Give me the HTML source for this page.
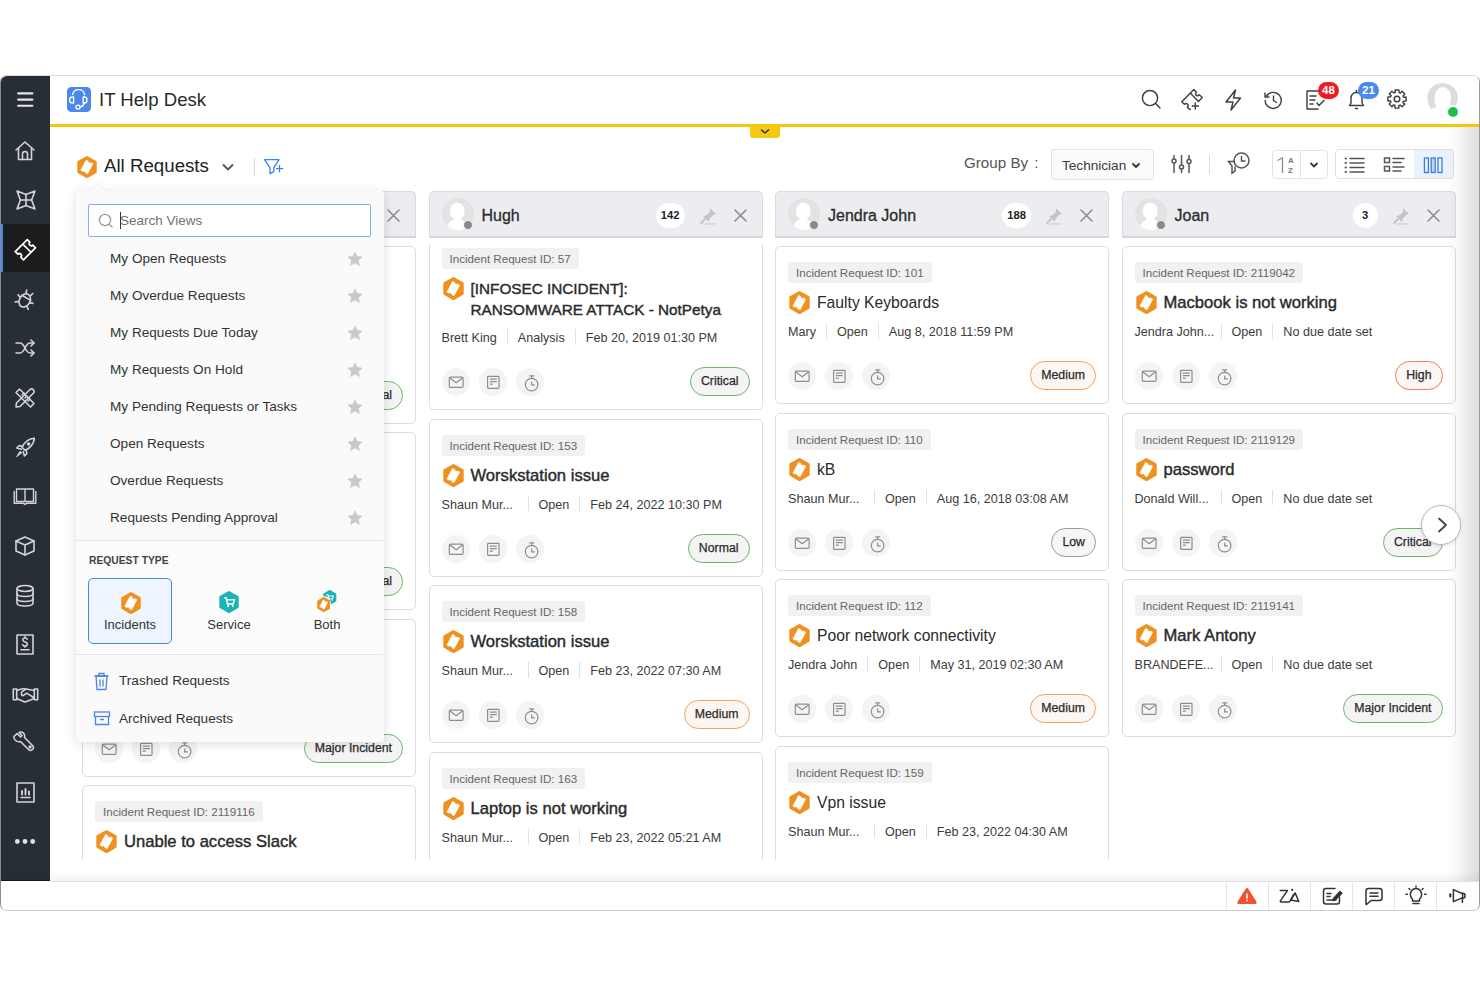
<!DOCTYPE html>
<html><head><meta charset="utf-8"><style>
*{box-sizing:border-box}
html,body{margin:0;padding:0;width:1480px;height:987px;overflow:hidden;background:#fff;font-family:"Liberation Sans", sans-serif}
#win{position:absolute;left:0;top:75px;width:1480px;height:836px;border:1px solid #c6cdd4;border-top-color:#dcdcdc;border-left-color:#8a8b8c;border-right-color:#9a9c9c;border-radius:7px;overflow:hidden;background:#fff}
#in{position:absolute;left:-1px;top:-76px;width:1480px;height:987px}
.colh{position:absolute;top:191px;width:334px;height:47px;background:#ecedf1;border:1px solid #d9dadd;border-bottom:2px solid #d6d6d6;border-radius:5px 5px 0 0}
.av{position:absolute;left:12px;top:5.5px;width:32px;height:32px;border-radius:50%;background:#e3e3e3;overflow:hidden}
.avd{position:absolute;left:33px;top:28px;width:10px;height:10px;border-radius:50%;background:#8a8a8a;border:1px solid #f4f4f4}
.cn{position:absolute;left:52px;top:13px;font-size:16px;-webkit-text-stroke:0.3px #2b2b2b;line-height:22px;color:#2b2b2b;white-space:nowrap}
.cnt{position:absolute;right:77px;top:10.5px;height:25px;padding:0 5px;min-width:25px;border-radius:12.5px;background:#fff;font-size:11.2px;font-weight:700;line-height:25px;color:#222;text-align:center}
.scroll{position:absolute;left:50px;top:245px;width:1430px;height:615px;overflow:hidden}
.scroll .card{margin-left:-50px;margin-top:-245px}
.card{position:absolute;width:334px;border:1px solid #dddddd;border-radius:5px;background:#fff}
.tag{position:absolute;left:12px;top:15px;height:21px;padding:0 8px;background:#f1f1f1;border-radius:3px;font-size:11.6px;line-height:21px;color:#666;white-space:nowrap}
.ttl{position:absolute;left:41px;top:46px;line-height:20.5px;color:#2a2a2a;white-space:nowrap}
.meta{position:absolute;left:2px;height:18px;white-space:nowrap;font-size:12.6px;line-height:18px;color:#3c3c3c}
.mi{display:inline-block;padding:0 10px;border-left:1px solid #e2e2e2;vertical-align:top;height:15.5px;line-height:18px}
.mi:first-child{border-left:none}
.ib{position:absolute;width:28px;height:28px;border-radius:50%;background:#f4f4f4}
.badge{position:absolute;right:12px;height:29px;padding:0 10px;border:1px solid;border-radius:15px;font-size:12.3px;-webkit-text-stroke:0.25px #2a2a2a;line-height:27px;color:#2a2a2a;white-space:nowrap}
#dd{position:absolute;left:76px;top:191px;width:307.5px;height:551px;border-top:1px solid #fafafa;background:#fafafa;box-shadow:0 2px 12px rgba(0,0,0,0.13);border-radius:3px}
#dd .notch{position:absolute;left:13px;top:-8px;width:0;height:0;border-left:9px solid transparent;border-right:9px solid transparent;border-bottom:9px solid #fafafa;filter:drop-shadow(0 -1px 1px rgba(0,0,0,0.06))}
.srch{position:absolute;left:12px;top:12px;width:283px;height:33px;border:1.3px solid #86acef;border-radius:2px;background:#fff}
.ddi{position:absolute;left:34px;font-size:13.6px;line-height:19px;color:#333;white-space:nowrap}
</style></head>
<body>
<div id="win"><div id="in">
<div style="position:absolute;left:50px;top:76px;width:1430px;height:48px;background:#fff"></div>
<div style="position:absolute;left:50px;top:124px;width:1430px;height:3.4px;background:#f4c70e"></div>
<div style="position:absolute;left:749.5px;top:126px;width:30.5px;height:11.5px;background:#f4c90f;border-radius:0 0 3px 3px"></div>
<svg style="position:absolute;left:759px;top:127px" width="12" height="8" viewBox="0 0 12 8" ><path d="M2.5 3 L6 6 L9.5 3" fill="none" stroke="#2a2f3a" stroke-width="1.5" stroke-linecap="round" stroke-linejoin="round"/></svg>
<div style="position:absolute;left:66.5px;top:87px;width:24.5px;height:24.8px;background:#4a88ec;border-radius:4.5px"></div>
<svg style="position:absolute;left:66px;top:87px" width="25" height="25" viewBox="0 0 25 25" ><g fill="none" stroke="#fff" stroke-width="1.4" stroke-linecap="round" stroke-linejoin="round"><path d="M6.6 7.6 A6.1 6.1 0 0 1 18.6 7.6"/><path d="M7.6 10 H6.2 C4.6 10 3.6 11.3 3.6 13 C3.6 14.7 4.6 16 6.2 16 H7.6 Z"/><path d="M17.2 10 H18.4 C20 10 21 11.3 21 13 C21 14.7 20 16 18.4 16 H17.2 Z"/><path d="M18.2 16.2 C17.6 18.4 15.8 19.6 14.2 19.9"/><circle cx="12" cy="20.1" r="2"/></g></svg>
<div style="position:absolute;left:99px;top:87px;font-size:18.6px;line-height:26px;color:#2a2a2a;white-space:nowrap">IT Help Desk</div>
<svg style="position:absolute;left:1140px;top:88px" width="23" height="23" viewBox="0 0 23 23" ><g fill="none" stroke="#404040" stroke-width="1.45" stroke-linecap="round" stroke-linejoin="round"><circle cx="10" cy="10" r="7.6"/><path d="M15.6 15.6 L20 20"/></g></svg>
<svg style="position:absolute;left:1180px;top:88px" width="24" height="24" viewBox="0 0 24 24" ><g fill="none" stroke="#404040" stroke-width="1.45" stroke-linecap="round" stroke-linejoin="round"><path d="M10.3 21.6 L7.3 19.3 Q8.8 17.5 7.5 16 Q6 15 4.4 16.3 L1.8 13.7 L13.8 1.5 L16.4 4.1 Q14.8 6 16.2 7.3 Q17.8 8.4 19.3 6.7 L22.3 9.6 L18.4 13.5 L10.9 5.7"/><path d="M15.3 14.9 V21.1 M12.2 18 H18.4"/></g></svg>
<svg style="position:absolute;left:1222px;top:88px" width="22" height="24" viewBox="0 0 22 24" ><g fill="none" stroke="#404040" stroke-width="1.45" stroke-linecap="round" stroke-linejoin="round"><path d="M13.5 2 L4 14 H11 L9 22 L18.5 10 H11.5 Z"/></g></svg>
<svg style="position:absolute;left:1262px;top:89px" width="23" height="22" viewBox="0 0 23 22" ><g fill="none" stroke="#404040" stroke-width="1.45" stroke-linecap="round" stroke-linejoin="round"><path d="M4.5 7 A8 8 0 1 1 3.2 11.5"/><path d="M3 4 V8 H7"/><path d="M11.5 7 V11.5 L14.5 13.5"/></g></svg>
<svg style="position:absolute;left:1304px;top:89px" width="22" height="22" viewBox="0 0 22 22" ><g fill="none" stroke="#404040" stroke-width="1.45" stroke-linecap="round" stroke-linejoin="round"><path d="M16 4 V2 H3 V20 H14"/><path d="M6 7 H12 M6 11 H11 M6 15 H9"/><path d="M13 14 L15 16.5 L20 11.5"/></g></svg>
<div style="position:absolute;left:1318px;top:82px;width:21px;height:17px;border-radius:9px;background:#eb1c24;color:#fff;font-size:11.5px;font-weight:700;text-align:center;line-height:17px">48</div>
<svg style="position:absolute;left:1346px;top:88px" width="21" height="23" viewBox="0 0 21 23" ><g fill="none" stroke="#404040" stroke-width="1.45" stroke-linecap="round" stroke-linejoin="round"><path d="M3.5 17.5 L5 15 V10 A5.5 5.5 0 0 1 16 10 V15 L17.5 17.5 Z"/><path d="M10.5 4 V2.5"/><path d="M9.5 20.5 H11.5"/></g></svg>
<div style="position:absolute;left:1358px;top:82px;width:21px;height:17px;border-radius:9px;background:#4a8af0;color:#fff;font-size:11.5px;font-weight:700;text-align:center;line-height:17px">21</div>
<svg style="position:absolute;left:1387px;top:89px" width="20" height="20" viewBox="0 0 20 20" ><g fill="none" stroke="#404040" stroke-width="1.45" stroke-linecap="round" stroke-linejoin="round"><path d="M19.10 8.07 L19.10 11.93 L16.47 12.10 L15.83 13.50 L17.80 15.07 L15.07 17.80 L13.09 16.06 L11.65 16.60 L11.93 19.10 L8.07 19.10 L7.90 16.47 L6.50 15.83 L4.93 17.80 L2.20 15.07 L3.94 13.09 L3.40 11.65 L0.90 11.93 L0.90 8.07 L3.53 7.90 L4.17 6.50 L2.20 4.93 L4.93 2.20 L6.91 3.94 L8.35 3.40 L8.07 0.90 L11.93 0.90 L12.10 3.53 L13.50 4.17 L15.07 2.20 L17.80 4.93 L16.06 6.91 L16.60 8.35 Z"/><circle cx="10" cy="10" r="2.8"/></g></svg>
<svg style="position:absolute;left:1424px;top:81px" width="38" height="38" viewBox="0 0 38 38" ><path d="M7.5 28 C1 22 1 3 18.5 2 C36 3 36 21 31 24.5 L25.5 23.5 C28 19 28 7 18.5 6 C10 7 9 20 12.5 25.5 Z" fill="#dcdcdc"/></svg>
<div style="position:absolute;left:1448px;top:107px;width:10px;height:10px;border-radius:50%;background:#1fbf4a"></div>
<div style="position:absolute;left:0;top:76px;width:50px;height:805px;background:#282e36;border-bottom:1px solid #151a20"></div>
<div style="position:absolute;left:0;top:224px;width:50px;height:48px;background:#1b1c1e"></div>
<div style="position:absolute;left:0;top:224px;width:3px;height:48px;background:#4a86e8"></div>
<svg style="position:absolute;left:15px;top:90px" width="20" height="18" viewBox="0 0 20 18" ><g stroke="#e6e6e6" stroke-width="2.1" stroke-linecap="round"><line x1="3.1" y1="3.4" x2="17.4" y2="3.4"/><line x1="3.1" y1="9.6" x2="17.4" y2="9.6"/><line x1="3.1" y1="15.8" x2="17.4" y2="15.8"/></g></svg>
<svg style="position:absolute;left:14px;top:140px" width="22" height="21" viewBox="0 0 22 21" ><g fill="none" stroke="#d2d4d7" stroke-width="1.6" stroke-linecap="round" stroke-linejoin="round"><path d="M2 10 L11 2 L20 10"/><path d="M4.5 8 V19.5 H17.5 V8"/><path d="M8.5 19.5 V14 A2.5 2.5 0 0 1 13.5 14 V19.5"/></g></svg>
<svg style="position:absolute;left:14.8px;top:189px" width="22" height="22" viewBox="0 0 22 22" ><g fill="none" stroke="#d2d4d7" stroke-width="1.6" stroke-linecap="round" stroke-linejoin="round"><path d="M2.1 2.1 L11 5.4 L19.9 2.1 L16.6 11 L19.9 19.9 L11 16.6 L2.1 19.9 L5.4 11 Z"/><path d="M11 5.4 V16.6 M5.4 11 H16.6"/></g></svg>
<svg style="position:absolute;left:13px;top:236px" width="26" height="26" viewBox="0 0 26 26" ><g fill="none" stroke="#ffffff" stroke-width="1.7" stroke-linejoin="round"><g transform="translate(12.35 13.7) rotate(-45)"><path d="M-8.5 -5.8 H8.5 V-2.1 A2.1 2.1 0 0 0 8.5 2.1 V5.8 H-8.5 V2.1 A2.1 2.1 0 0 0 -8.5 -2.1 Z"/><path d="M2.2 -5.8 V5.8"/></g></g></svg>
<svg style="position:absolute;left:14px;top:288px" width="22" height="23" viewBox="0 0 22 23" ><g fill="none" stroke="#d2d4d7" stroke-width="1.6" stroke-linecap="round" stroke-linejoin="round"><g transform="rotate(30 11 12)"><ellipse cx="11" cy="12.5" rx="5.3" ry="7"/><path d="M5.9 9.5 H16.1"/><path d="M8.5 5.8 L7.5 2.5 M13.5 5.8 L14.5 2.5 M5.7 12 L2.5 11 M16.3 12 L19.5 11 M6.2 16.5 L3.5 18.5 M15.8 16.5 L18.5 18.5"/></g></g></svg>
<svg style="position:absolute;left:14px;top:338px" width="22" height="20" viewBox="0 0 22 20" ><g fill="none" stroke="#d2d4d7" stroke-width="1.6" stroke-linecap="round" stroke-linejoin="round"><path d="M2 5 H6 C11 5 11 15 16 15 H20"/><path d="M2 15 H6 C11 15 11 5 16 5 H20"/><path d="M17 2 L20 5 L17 8 M17 12 L20 15 L17 18"/></g></svg>
<svg style="position:absolute;left:14px;top:387px" width="22" height="22" viewBox="0 0 22 22" ><g fill="none" stroke="#d2d4d7" stroke-width="1.6" stroke-linecap="round" stroke-linejoin="round"><path d="M2 5.5 L5.5 2 L20 16.5 L16.5 20 Z"/><path d="M8 8 L10 6 M11 11 L13 9 M14 14 L16 12"/><path d="M16 2.5 A2.5 2.5 0 0 1 19.5 6 L6 19.5 L2 20 L2.5 16 Z"/></g></svg>
<svg style="position:absolute;left:15px;top:437px" width="20" height="21" viewBox="0 0 20 21" ><g fill="none" stroke="#d2d4d7" stroke-width="1.6" stroke-linecap="round" stroke-linejoin="round"><path d="M19.4 1.2 C13.5 1.6 9.2 5.6 7 10.2 L10.2 13.4 C14.8 11.2 18.8 7 19.4 1.2 Z"/><path d="M7.6 9.2 L4.2 8.6 L1.8 11 L6.4 12.2 M11.2 12.8 L11.8 16.6 L9.4 19 L8.2 14.6"/></g><circle cx="13.6" cy="7" r="1.8" fill="#d2d4d7"/><path d="M5.2 14.2 L1.6 19.6 L6.8 15.8 Z" fill="#d2d4d7" stroke="#d2d4d7" stroke-width="1" stroke-linejoin="round"/></svg>
<svg style="position:absolute;left:13px;top:487px" width="24" height="18" viewBox="0 0 24 18" ><g fill="none" stroke="#d2d4d7" stroke-width="1.4" stroke-linejoin="round"><path d="M3.5 2 H12 V14.5 H3.5 Z M12 2 H20.5 V14.5 H12"/><path d="M1.2 4 V16.3 H10.5 L12 17.3 L13.5 16.3 H22.8 V4"/></g></svg>
<svg style="position:absolute;left:14px;top:535px" width="22" height="22" viewBox="0 0 22 22" ><g fill="none" stroke="#d2d4d7" stroke-width="1.6" stroke-linecap="round" stroke-linejoin="round"><path d="M11 2 L20 6 V16 L11 20 L2 16 V6 Z"/><path d="M2 6 L11 10 L20 6 M11 10 V20"/></g></svg>
<svg style="position:absolute;left:15px;top:584px" width="20" height="24" viewBox="0 0 20 24" ><g fill="none" stroke="#d2d4d7" stroke-width="1.6" stroke-linecap="round" stroke-linejoin="round"><ellipse cx="10" cy="4.5" rx="8" ry="3"/><path d="M2 4.5 V19 C2 23 18 23 18 19 V4.5"/><path d="M2 9.5 C2 13.5 18 13.5 18 9.5 M2 14.5 C2 18.5 18 18.5 18 14.5"/></g></svg>
<svg style="position:absolute;left:15px;top:633px" width="20" height="23" viewBox="0 0 20 23" ><g fill="none" stroke="#d2d4d7" stroke-width="1.6" stroke-linecap="round" stroke-linejoin="round"><rect x="2" y="2" width="16" height="19"/><path d="M6 16.8 H14"/><path d="M12.3 6.2 Q11.8 5 10 5 Q7.8 5 7.8 6.8 Q7.8 8.4 10 8.9 Q12.3 9.4 12.3 11.2 Q12.3 13 10 13 Q8.2 13 7.6 11.6 M10 3.6 V5 M10 13 V14.3" stroke-width="1.5"/></g></svg>
<svg style="position:absolute;left:12px;top:686px" width="27" height="18" viewBox="0 0 27 18" ><g fill="none" stroke="#d2d4d7" stroke-width="1.6" stroke-linecap="round" stroke-linejoin="round"><rect x="1.3" y="3" width="3.4" height="10.8"/><rect x="22.3" y="3" width="3.4" height="10.8"/><path d="M4.7 4.5 C8 3 11 2.2 14 3 L22.3 4.5"/><path d="M14 3 L9.8 5.8 Q8.6 9.8 11 9.6 L14.8 7.2 L22.3 12"/><path d="M4.7 12.5 L11.5 15.5 Q13 16.2 14.5 15.5 L22.3 12.5"/></g></svg>
<svg style="position:absolute;left:12px;top:730px" width="23" height="23" viewBox="0 0 23 23" ><g fill="none" stroke="#d2d4d7" stroke-width="1.6" stroke-linecap="round" stroke-linejoin="round"><path d="M2 6.5 L5 3.5 L8.5 7 L10 5.5 L7 2.5 C10 1 13.5 3.5 12.5 7.5 L20.5 15.5 A2.8 2.8 0 0 1 16.5 19.5 L8.5 11.5 C4.5 12.5 1.5 9.5 2 6.5 Z"/><circle cx="18" cy="17" r="0.9"/></g></svg>
<svg style="position:absolute;left:15px;top:781px" width="21" height="23" viewBox="0 0 21 23" ><g fill="none" stroke="#d2d4d7" stroke-width="1.6" stroke-linecap="round" stroke-linejoin="round"><rect x="2" y="2" width="17" height="19"/><path d="M6 16.5 H15"/><path d="M7 13.5 V10 M10.5 13.5 V8 M14 13.5 V10.5" stroke-width="1.9"/></g></svg>
<svg style="position:absolute;left:14px;top:837px" width="22" height="9" viewBox="0 0 22 9" ><g fill="#e0e2e5"><circle cx="3.3" cy="4.5" r="2.4"/><circle cx="11" cy="4.5" r="2.4"/><circle cx="18.7" cy="4.5" r="2.4"/></g></svg>
<svg style="position:absolute;left:77px;top:156px" width="20" height="22.1" viewBox="0 0 21 23.2" ><path d="M10.5 1.2 L19.5 6.4 V16.8 L10.5 22 L1.5 16.8 V6.4 Z" fill="#f0901e" stroke="#f0901e" stroke-width="2.4" stroke-linejoin="round"/><g transform="translate(10.3 11.6) rotate(28)"><path d="M-4 -6 H-1.5 A1.6 1.6 0 0 0 1.5 -6 H4 V6 H1.5 A1.6 1.6 0 0 0 -1.5 6 H-4 Z" fill="#fff" stroke="#fff" stroke-width="0.6" stroke-linejoin="round"/></g></svg>
<div style="position:absolute;left:104px;top:153px;font-size:18.7px;line-height:26px;color:#222;white-space:nowrap">All Requests</div>
<svg style="position:absolute;left:219px;top:160px" width="18" height="12" viewBox="0 0 18 12" ><path d="M4.5 5 L9 9.5 L13.5 5" fill="none" stroke="#5a5a5a" stroke-width="2" stroke-linecap="round" stroke-linejoin="round"/></svg>
<div style="position:absolute;left:254px;top:158px;width:1px;height:18px;background:#d6d6d6"></div>
<svg style="position:absolute;left:262px;top:157px" width="24" height="20" viewBox="0 0 24 20" ><g fill="none" stroke="#3b82f0" stroke-width="1.3" stroke-linejoin="round" stroke-linecap="round"><path d="M2.6 2.7 H17 L11.8 10.8 V14.6 L8 16.8 V10.8 Z"/><path d="M17.5 8.4 V14.8 M14.3 11.6 H20.7"/></g></svg>
<div style="position:absolute;left:964px;top:153px;font-size:15.2px;line-height:20px;color:#555;white-space:nowrap">Group By<span style="margin-left:6px">:</span></div>
<div style="position:absolute;left:1051px;top:149px;width:103px;height:31px;border:1px solid #e3e3e3;border-radius:3px;background:#fbfbfb"></div>
<div style="position:absolute;left:1062px;top:156.5px;font-size:13.6px;line-height:18px;color:#3a3a3a;white-space:nowrap">Technician</div>
<svg style="position:absolute;left:1130px;top:160px" width="12" height="10" viewBox="0 0 12 10" ><path d="M3 4 L6 7 L9 4" fill="none" stroke="#333" stroke-width="1.8" stroke-linecap="round"/></svg>
<svg style="position:absolute;left:1170px;top:154px" width="23" height="20" viewBox="0 0 23 20" ><g fill="none" stroke="#555" stroke-width="1.5" stroke-linecap="round"><path d="M4 1.5 V18.5 M11.5 1.5 V18.5 M19 1.5 V18.5"/></g><g fill="#fff" stroke="#555" stroke-width="1.5"><circle cx="4" cy="7" r="2"/><circle cx="11.5" cy="13" r="2"/><circle cx="19" cy="7.5" r="2"/></g></svg>
<div style="position:absolute;left:1209px;top:155px;width:1px;height:19px;background:#dcdcdc"></div>
<svg style="position:absolute;left:1226px;top:151px" width="25" height="25" viewBox="0 0 25 25" ><g fill="none" stroke="#555" stroke-width="1.5" stroke-linecap="round"><circle cx="15.5" cy="9.5" r="7.5"/><path d="M15.5 5.5 V10 H19"/><path d="M8.5 10.5 L2.5 10.5 L6 15 V22 L9 20 V16"/></g></svg>
<div style="position:absolute;left:1272px;top:150px;width:56px;height:29px;border:1px solid #e3e3e3;border-radius:4px;background:#fff"></div>
<div style="position:absolute;left:1300px;top:151px;width:1px;height:27px;background:#e3e3e3"></div>
<svg style="position:absolute;left:1274px;top:154px" width="12" height="22" viewBox="0 0 12 22" ><path d="M3.5 6.5 L8.5 3.8 V19" fill="none" stroke="#8c8c8c" stroke-width="1.3" stroke-linejoin="round"/></svg>
<div style="position:absolute;left:1288px;top:155.5px;font-size:8px;font-weight:700;line-height:10px;color:#7a7a7a;white-space:nowrap">A<br>Z</div>
<svg style="position:absolute;left:1308px;top:160px" width="12" height="10" viewBox="0 0 12 10" ><path d="M3 3.5 L6 6.5 L9 3.5" fill="none" stroke="#333" stroke-width="1.8" stroke-linecap="round"/></svg>
<div style="position:absolute;left:1335px;top:149px;width:119px;height:30px;border:1px solid #e0e0e0;border-radius:4px;background:#fff;overflow:hidden"><div style="position:absolute;left:78px;top:0;width:40px;height:30px;background:#eaf2fd"></div></div>
<svg style="position:absolute;left:1344px;top:156px" width="22" height="18" viewBox="0 0 22 18" ><g stroke="#555" stroke-width="1.5" stroke-linecap="round"><path d="M6 2.5 H20 M6 7 H20 M6 11.5 H20 M6 16 H20"/><path d="M1.5 2.5 H2 M1.5 7 H2 M1.5 11.5 H2 M1.5 16 H2" stroke-width="1.8"/></g></svg>
<svg style="position:absolute;left:1383px;top:156px" width="23" height="18" viewBox="0 0 23 18" ><g fill="none" stroke="#555" stroke-width="1.5"><rect x="1.5" y="2" width="5" height="4.5"/><rect x="1.5" y="10.5" width="5" height="4.5"/><path d="M10 2.5 H21 M10 6.5 H18 M10 11 H21 M10 15 H18" stroke-linecap="round"/></g></svg>
<svg style="position:absolute;left:1422px;top:156px" width="22" height="18" viewBox="0 0 22 18" ><rect x="9.4" y="2" width="3.4" height="14" fill="#c8d3e3"/><g fill="none" stroke="#3b7ddd" stroke-width="1.3"><rect x="2.4" y="2" width="4" height="14.5"/><rect x="9.2" y="2" width="4" height="14.5"/><rect x="16" y="2" width="4" height="14.5"/></g></svg>
<div class="colh" style="left:82px"><div class="av"><svg width="32" height="32" viewBox="0 0 32 32" style="position:absolute;left:0;top:0"><ellipse cx="15.3" cy="13.2" rx="7.4" ry="8.6" fill="#fff"/><path d="M3.5 32 C5 25.5 9 22.5 12.5 21 L18.5 21 C22 22.5 26 25.5 27.5 32 Z" fill="#fff"/></svg></div><div class="avd"></div><div class="cn">Unassigned</div><div class="cnt">24</div><svg style="position:absolute;left:268px;top:14px" width="22" height="20" viewBox="0 0 22 20"><path d="M12 2 L18 8 L15 9 L11.5 13 L11 16 L5 10 L8 9.5 L12 6 Z" fill="#c4c4c4"/><path d="M7 13 L3 17" stroke="#c4c4c4" stroke-width="1.8" stroke-linecap="round"/><ellipse cx="11" cy="17.8" rx="8" ry="0.9" fill="#d6d6d9"/></svg><svg style="position:absolute;left:303px;top:16px" width="15" height="15" viewBox="0 0 15 15"><path d="M2 2 L13 13 M13 2 L2 13" stroke="#8a8a8a" stroke-width="1.5" stroke-linecap="round"/></svg></div>
<div class="colh" style="left:428.5px"><div class="av"><svg width="32" height="32" viewBox="0 0 32 32" style="position:absolute;left:0;top:0"><ellipse cx="15.3" cy="13.2" rx="7.4" ry="8.6" fill="#fff"/><path d="M3.5 32 C5 25.5 9 22.5 12.5 21 L18.5 21 C22 22.5 26 25.5 27.5 32 Z" fill="#fff"/></svg></div><div class="avd"></div><div class="cn">Hugh</div><div class="cnt">142</div><svg style="position:absolute;left:268px;top:14px" width="22" height="20" viewBox="0 0 22 20"><path d="M12 2 L18 8 L15 9 L11.5 13 L11 16 L5 10 L8 9.5 L12 6 Z" fill="#c4c4c4"/><path d="M7 13 L3 17" stroke="#c4c4c4" stroke-width="1.8" stroke-linecap="round"/><ellipse cx="11" cy="17.8" rx="8" ry="0.9" fill="#d6d6d9"/></svg><svg style="position:absolute;left:303px;top:16px" width="15" height="15" viewBox="0 0 15 15"><path d="M2 2 L13 13 M13 2 L2 13" stroke="#8a8a8a" stroke-width="1.5" stroke-linecap="round"/></svg></div>
<div class="colh" style="left:775px"><div class="av"><svg width="32" height="32" viewBox="0 0 32 32" style="position:absolute;left:0;top:0"><ellipse cx="15.3" cy="13.2" rx="7.4" ry="8.6" fill="#fff"/><path d="M3.5 32 C5 25.5 9 22.5 12.5 21 L18.5 21 C22 22.5 26 25.5 27.5 32 Z" fill="#fff"/></svg></div><div class="avd"></div><div class="cn">Jendra John</div><div class="cnt">188</div><svg style="position:absolute;left:268px;top:14px" width="22" height="20" viewBox="0 0 22 20"><path d="M12 2 L18 8 L15 9 L11.5 13 L11 16 L5 10 L8 9.5 L12 6 Z" fill="#c4c4c4"/><path d="M7 13 L3 17" stroke="#c4c4c4" stroke-width="1.8" stroke-linecap="round"/><ellipse cx="11" cy="17.8" rx="8" ry="0.9" fill="#d6d6d9"/></svg><svg style="position:absolute;left:303px;top:16px" width="15" height="15" viewBox="0 0 15 15"><path d="M2 2 L13 13 M13 2 L2 13" stroke="#8a8a8a" stroke-width="1.5" stroke-linecap="round"/></svg></div>
<div class="colh" style="left:1121.5px"><div class="av"><svg width="32" height="32" viewBox="0 0 32 32" style="position:absolute;left:0;top:0"><ellipse cx="15.3" cy="13.2" rx="7.4" ry="8.6" fill="#fff"/><path d="M3.5 32 C5 25.5 9 22.5 12.5 21 L18.5 21 C22 22.5 26 25.5 27.5 32 Z" fill="#fff"/></svg></div><div class="avd"></div><div class="cn">Joan</div><div class="cnt">3</div><svg style="position:absolute;left:268px;top:14px" width="22" height="20" viewBox="0 0 22 20"><path d="M12 2 L18 8 L15 9 L11.5 13 L11 16 L5 10 L8 9.5 L12 6 Z" fill="#c4c4c4"/><path d="M7 13 L3 17" stroke="#c4c4c4" stroke-width="1.8" stroke-linecap="round"/><ellipse cx="11" cy="17.8" rx="8" ry="0.9" fill="#d6d6d9"/></svg><svg style="position:absolute;left:303px;top:16px" width="15" height="15" viewBox="0 0 15 15"><path d="M2 2 L13 13 M13 2 L2 13" stroke="#8a8a8a" stroke-width="1.5" stroke-linecap="round"/></svg></div>
<div class="scroll">
<div class="card" style="left:82px;top:246px;height:178px"><div class="tag">Incident Request ID: 2119001</div><svg style="position:absolute;left:13px;top:44px" width="21" height="23.2" viewBox="0 0 21 23.2" ><path d="M10.5 1.2 L19.5 6.4 V16.8 L10.5 22 L1.5 16.8 V6.4 Z" fill="#f0901e" stroke="#f0901e" stroke-width="2.4" stroke-linejoin="round"/><g transform="translate(10.3 11.6) rotate(28)"><path d="M-4 -6 H-1.5 A1.6 1.6 0 0 0 1.5 -6 H4 V6 H1.5 A1.6 1.6 0 0 0 -1.5 6 H-4 Z" fill="#fff" stroke="#fff" stroke-width="0.6" stroke-linejoin="round"/></g></svg><div class="ttl" style="font-size:16.6px;-webkit-text-stroke:0.4px #2a2a2a">Printer not working on 3rd<br>floor</div><div class="meta" style="top:96px"><span class="mi" style="width:96px">Shaun Mur...</span><span class="mi">Open</span><span class="mi">Feb 24, 2022 10:30 PM</span></div><div class="ib" style="left:12px;top:135px"><svg width="28" height="28" style="position:absolute;left:0;top:0"><g fill="none" stroke="#8d8d8d" stroke-width="1.2"><rect x="7.3" y="9.2" width="13.8" height="10.2" rx="1.2"/><path d="M7.6 9.8 L14.2 14.8 L20.8 9.8"/></g></svg></div><div class="ib" style="left:49px;top:135px"><svg width="28" height="28" style="position:absolute;left:0;top:0"><g fill="none" stroke="#8d8d8d" stroke-width="1.2"><rect x="8.6" y="8.3" width="11.4" height="12" rx="0.8"/><path d="M10.8 11.2 H17.8 M10.8 13.6 H17.8 M10.8 16.1 H13.8"/></g></svg></div><div class="ib" style="left:86px;top:135px"><svg width="28" height="28" style="position:absolute;left:0;top:0"><g fill="none" stroke="#8d8d8d" stroke-width="1.2"><circle cx="15.6" cy="16.6" r="6.3"/><path d="M15.7 13.6 V16.9 H18.8 M13.2 7.8 H18.2 M15.7 7.8 V10.3"/></g></svg></div><div class="badge" style="top:134px;border-color:#6bb56b;background:#f4f4f4">Normal</div></div>
<div class="card" style="left:82px;top:432px;height:178px"><div class="tag">Incident Request ID: 2119002</div><svg style="position:absolute;left:13px;top:44px" width="21" height="23.2" viewBox="0 0 21 23.2" ><path d="M10.5 1.2 L19.5 6.4 V16.8 L10.5 22 L1.5 16.8 V6.4 Z" fill="#f0901e" stroke="#f0901e" stroke-width="2.4" stroke-linejoin="round"/><g transform="translate(10.3 11.6) rotate(28)"><path d="M-4 -6 H-1.5 A1.6 1.6 0 0 0 1.5 -6 H4 V6 H1.5 A1.6 1.6 0 0 0 -1.5 6 H-4 Z" fill="#fff" stroke="#fff" stroke-width="0.6" stroke-linejoin="round"/></g></svg><div class="ttl" style="font-size:16.6px;-webkit-text-stroke:0.4px #2a2a2a">Outlook not syncing with<br>mobile</div><div class="meta" style="top:96px"><span class="mi" style="width:96px">Shaun Mur...</span><span class="mi">Open</span><span class="mi">Feb 24, 2022 10:30 PM</span></div><div class="ib" style="left:12px;top:135px"><svg width="28" height="28" style="position:absolute;left:0;top:0"><g fill="none" stroke="#8d8d8d" stroke-width="1.2"><rect x="7.3" y="9.2" width="13.8" height="10.2" rx="1.2"/><path d="M7.6 9.8 L14.2 14.8 L20.8 9.8"/></g></svg></div><div class="ib" style="left:49px;top:135px"><svg width="28" height="28" style="position:absolute;left:0;top:0"><g fill="none" stroke="#8d8d8d" stroke-width="1.2"><rect x="8.6" y="8.3" width="11.4" height="12" rx="0.8"/><path d="M10.8 11.2 H17.8 M10.8 13.6 H17.8 M10.8 16.1 H13.8"/></g></svg></div><div class="ib" style="left:86px;top:135px"><svg width="28" height="28" style="position:absolute;left:0;top:0"><g fill="none" stroke="#8d8d8d" stroke-width="1.2"><circle cx="15.6" cy="16.6" r="6.3"/><path d="M15.7 13.6 V16.9 H18.8 M13.2 7.8 H18.2 M15.7 7.8 V10.3"/></g></svg></div><div class="badge" style="top:134px;border-color:#6bb56b;background:#f4f4f4">Normal</div></div>
<div class="card" style="left:82px;top:618.5px;height:158px"><div class="tag">Incident Request ID: 2119003</div><svg style="position:absolute;left:13px;top:44px" width="21" height="23.2" viewBox="0 0 21 23.2" ><path d="M10.5 1.2 L19.5 6.4 V16.8 L10.5 22 L1.5 16.8 V6.4 Z" fill="#f0901e" stroke="#f0901e" stroke-width="2.4" stroke-linejoin="round"/><g transform="translate(10.3 11.6) rotate(28)"><path d="M-4 -6 H-1.5 A1.6 1.6 0 0 0 1.5 -6 H4 V6 H1.5 A1.6 1.6 0 0 0 -1.5 6 H-4 Z" fill="#fff" stroke="#fff" stroke-width="0.6" stroke-linejoin="round"/></g></svg><div class="ttl" style="font-size:16.6px;-webkit-text-stroke:0.4px #2a2a2a">Email server down</div><div class="meta" style="top:76px"><span class="mi" style="width:96px">Shaun Mur...</span><span class="mi">Open</span><span class="mi">Feb 24, 2022 10:30 PM</span></div><div class="ib" style="left:12px;top:115px"><svg width="28" height="28" style="position:absolute;left:0;top:0"><g fill="none" stroke="#8d8d8d" stroke-width="1.2"><rect x="7.3" y="9.2" width="13.8" height="10.2" rx="1.2"/><path d="M7.6 9.8 L14.2 14.8 L20.8 9.8"/></g></svg></div><div class="ib" style="left:49px;top:115px"><svg width="28" height="28" style="position:absolute;left:0;top:0"><g fill="none" stroke="#8d8d8d" stroke-width="1.2"><rect x="8.6" y="8.3" width="11.4" height="12" rx="0.8"/><path d="M10.8 11.2 H17.8 M10.8 13.6 H17.8 M10.8 16.1 H13.8"/></g></svg></div><div class="ib" style="left:86px;top:115px"><svg width="28" height="28" style="position:absolute;left:0;top:0"><g fill="none" stroke="#8d8d8d" stroke-width="1.2"><circle cx="15.6" cy="16.6" r="6.3"/><path d="M15.7 13.6 V16.9 H18.8 M13.2 7.8 H18.2 M15.7 7.8 V10.3"/></g></svg></div><div class="badge" style="top:114px;border-color:#6bb56b;background:#f4f4f4">Major Incident</div></div>
<div class="card" style="left:82px;top:785px;height:158px"><div class="tag">Incident Request ID: 2119116</div><svg style="position:absolute;left:13px;top:44px" width="21" height="23.2" viewBox="0 0 21 23.2" ><path d="M10.5 1.2 L19.5 6.4 V16.8 L10.5 22 L1.5 16.8 V6.4 Z" fill="#f0901e" stroke="#f0901e" stroke-width="2.4" stroke-linejoin="round"/><g transform="translate(10.3 11.6) rotate(28)"><path d="M-4 -6 H-1.5 A1.6 1.6 0 0 0 1.5 -6 H4 V6 H1.5 A1.6 1.6 0 0 0 -1.5 6 H-4 Z" fill="#fff" stroke="#fff" stroke-width="0.6" stroke-linejoin="round"/></g></svg><div class="ttl" style="font-size:16.6px;-webkit-text-stroke:0.4px #2a2a2a">Unable to access Slack</div><div class="meta" style="top:76px"><span class="mi" style="width:96px">Shaun Mur...</span><span class="mi">Open</span><span class="mi">Feb 24, 2022 10:30 PM</span></div><div class="ib" style="left:12px;top:115px"><svg width="28" height="28" style="position:absolute;left:0;top:0"><g fill="none" stroke="#8d8d8d" stroke-width="1.2"><rect x="7.3" y="9.2" width="13.8" height="10.2" rx="1.2"/><path d="M7.6 9.8 L14.2 14.8 L20.8 9.8"/></g></svg></div><div class="ib" style="left:49px;top:115px"><svg width="28" height="28" style="position:absolute;left:0;top:0"><g fill="none" stroke="#8d8d8d" stroke-width="1.2"><rect x="8.6" y="8.3" width="11.4" height="12" rx="0.8"/><path d="M10.8 11.2 H17.8 M10.8 13.6 H17.8 M10.8 16.1 H13.8"/></g></svg></div><div class="ib" style="left:86px;top:115px"><svg width="28" height="28" style="position:absolute;left:0;top:0"><g fill="none" stroke="#8d8d8d" stroke-width="1.2"><circle cx="15.6" cy="16.6" r="6.3"/><path d="M15.7 13.6 V16.9 H18.8 M13.2 7.8 H18.2 M15.7 7.8 V10.3"/></g></svg></div><div class="badge" style="top:114px;border-color:#6bb56b;background:#f4f4f4">Normal</div></div>
<div class="card" style="left:428.5px;top:232px;height:178px"><div class="tag">Incident Request ID: 57</div><svg style="position:absolute;left:13px;top:44px" width="21" height="23.2" viewBox="0 0 21 23.2" ><path d="M10.5 1.2 L19.5 6.4 V16.8 L10.5 22 L1.5 16.8 V6.4 Z" fill="#f0901e" stroke="#f0901e" stroke-width="2.4" stroke-linejoin="round"/><g transform="translate(10.3 11.6) rotate(28)"><path d="M-4 -6 H-1.5 A1.6 1.6 0 0 0 1.5 -6 H4 V6 H1.5 A1.6 1.6 0 0 0 -1.5 6 H-4 Z" fill="#fff" stroke="#fff" stroke-width="0.6" stroke-linejoin="round"/></g></svg><div class="ttl" style="font-size:15.3px;-webkit-text-stroke:0.4px #2a2a2a">[INFOSEC INCIDENT]:<br>RANSOMWARE ATTACK - NotPetya</div><div class="meta" style="top:96px"><span class="mi">Brett King</span><span class="mi">Analysis</span><span class="mi">Feb 20, 2019 01:30 PM</span></div><div class="ib" style="left:12px;top:135px"><svg width="28" height="28" style="position:absolute;left:0;top:0"><g fill="none" stroke="#8d8d8d" stroke-width="1.2"><rect x="7.3" y="9.2" width="13.8" height="10.2" rx="1.2"/><path d="M7.6 9.8 L14.2 14.8 L20.8 9.8"/></g></svg></div><div class="ib" style="left:49px;top:135px"><svg width="28" height="28" style="position:absolute;left:0;top:0"><g fill="none" stroke="#8d8d8d" stroke-width="1.2"><rect x="8.6" y="8.3" width="11.4" height="12" rx="0.8"/><path d="M10.8 11.2 H17.8 M10.8 13.6 H17.8 M10.8 16.1 H13.8"/></g></svg></div><div class="ib" style="left:86px;top:135px"><svg width="28" height="28" style="position:absolute;left:0;top:0"><g fill="none" stroke="#8d8d8d" stroke-width="1.2"><circle cx="15.6" cy="16.6" r="6.3"/><path d="M15.7 13.6 V16.9 H18.8 M13.2 7.8 H18.2 M15.7 7.8 V10.3"/></g></svg></div><div class="badge" style="top:134px;border-color:#6bb56b;background:#f4f4f4">Critical</div></div>
<div class="card" style="left:428.5px;top:418.5px;height:158px"><div class="tag">Incident Request ID: 153</div><svg style="position:absolute;left:13px;top:44px" width="21" height="23.2" viewBox="0 0 21 23.2" ><path d="M10.5 1.2 L19.5 6.4 V16.8 L10.5 22 L1.5 16.8 V6.4 Z" fill="#f0901e" stroke="#f0901e" stroke-width="2.4" stroke-linejoin="round"/><g transform="translate(10.3 11.6) rotate(28)"><path d="M-4 -6 H-1.5 A1.6 1.6 0 0 0 1.5 -6 H4 V6 H1.5 A1.6 1.6 0 0 0 -1.5 6 H-4 Z" fill="#fff" stroke="#fff" stroke-width="0.6" stroke-linejoin="round"/></g></svg><div class="ttl" style="font-size:16.6px;-webkit-text-stroke:0.4px #2a2a2a">Worskstation issue</div><div class="meta" style="top:76px"><span class="mi" style="width:96px">Shaun Mur...</span><span class="mi">Open</span><span class="mi">Feb 24, 2022 10:30 PM</span></div><div class="ib" style="left:12px;top:115px"><svg width="28" height="28" style="position:absolute;left:0;top:0"><g fill="none" stroke="#8d8d8d" stroke-width="1.2"><rect x="7.3" y="9.2" width="13.8" height="10.2" rx="1.2"/><path d="M7.6 9.8 L14.2 14.8 L20.8 9.8"/></g></svg></div><div class="ib" style="left:49px;top:115px"><svg width="28" height="28" style="position:absolute;left:0;top:0"><g fill="none" stroke="#8d8d8d" stroke-width="1.2"><rect x="8.6" y="8.3" width="11.4" height="12" rx="0.8"/><path d="M10.8 11.2 H17.8 M10.8 13.6 H17.8 M10.8 16.1 H13.8"/></g></svg></div><div class="ib" style="left:86px;top:115px"><svg width="28" height="28" style="position:absolute;left:0;top:0"><g fill="none" stroke="#8d8d8d" stroke-width="1.2"><circle cx="15.6" cy="16.6" r="6.3"/><path d="M15.7 13.6 V16.9 H18.8 M13.2 7.8 H18.2 M15.7 7.8 V10.3"/></g></svg></div><div class="badge" style="top:114px;border-color:#6bb56b;background:#f4f4f4">Normal</div></div>
<div class="card" style="left:428.5px;top:585px;height:158px"><div class="tag">Incident Request ID: 158</div><svg style="position:absolute;left:13px;top:44px" width="21" height="23.2" viewBox="0 0 21 23.2" ><path d="M10.5 1.2 L19.5 6.4 V16.8 L10.5 22 L1.5 16.8 V6.4 Z" fill="#f0901e" stroke="#f0901e" stroke-width="2.4" stroke-linejoin="round"/><g transform="translate(10.3 11.6) rotate(28)"><path d="M-4 -6 H-1.5 A1.6 1.6 0 0 0 1.5 -6 H4 V6 H1.5 A1.6 1.6 0 0 0 -1.5 6 H-4 Z" fill="#fff" stroke="#fff" stroke-width="0.6" stroke-linejoin="round"/></g></svg><div class="ttl" style="font-size:16.6px;-webkit-text-stroke:0.4px #2a2a2a">Worskstation issue</div><div class="meta" style="top:76px"><span class="mi" style="width:96px">Shaun Mur...</span><span class="mi">Open</span><span class="mi">Feb 23, 2022 07:30 AM</span></div><div class="ib" style="left:12px;top:115px"><svg width="28" height="28" style="position:absolute;left:0;top:0"><g fill="none" stroke="#8d8d8d" stroke-width="1.2"><rect x="7.3" y="9.2" width="13.8" height="10.2" rx="1.2"/><path d="M7.6 9.8 L14.2 14.8 L20.8 9.8"/></g></svg></div><div class="ib" style="left:49px;top:115px"><svg width="28" height="28" style="position:absolute;left:0;top:0"><g fill="none" stroke="#8d8d8d" stroke-width="1.2"><rect x="8.6" y="8.3" width="11.4" height="12" rx="0.8"/><path d="M10.8 11.2 H17.8 M10.8 13.6 H17.8 M10.8 16.1 H13.8"/></g></svg></div><div class="ib" style="left:86px;top:115px"><svg width="28" height="28" style="position:absolute;left:0;top:0"><g fill="none" stroke="#8d8d8d" stroke-width="1.2"><circle cx="15.6" cy="16.6" r="6.3"/><path d="M15.7 13.6 V16.9 H18.8 M13.2 7.8 H18.2 M15.7 7.8 V10.3"/></g></svg></div><div class="badge" style="top:114px;border-color:#f2a25a;background:#fcf7f3">Medium</div></div>
<div class="card" style="left:428.5px;top:751.5px;height:158px"><div class="tag">Incident Request ID: 163</div><svg style="position:absolute;left:13px;top:44px" width="21" height="23.2" viewBox="0 0 21 23.2" ><path d="M10.5 1.2 L19.5 6.4 V16.8 L10.5 22 L1.5 16.8 V6.4 Z" fill="#f0901e" stroke="#f0901e" stroke-width="2.4" stroke-linejoin="round"/><g transform="translate(10.3 11.6) rotate(28)"><path d="M-4 -6 H-1.5 A1.6 1.6 0 0 0 1.5 -6 H4 V6 H1.5 A1.6 1.6 0 0 0 -1.5 6 H-4 Z" fill="#fff" stroke="#fff" stroke-width="0.6" stroke-linejoin="round"/></g></svg><div class="ttl" style="font-size:16.6px;-webkit-text-stroke:0.4px #2a2a2a">Laptop is not working</div><div class="meta" style="top:76px"><span class="mi" style="width:96px">Shaun Mur...</span><span class="mi">Open</span><span class="mi">Feb 23, 2022 05:21 AM</span></div><div class="ib" style="left:12px;top:115px"><svg width="28" height="28" style="position:absolute;left:0;top:0"><g fill="none" stroke="#8d8d8d" stroke-width="1.2"><rect x="7.3" y="9.2" width="13.8" height="10.2" rx="1.2"/><path d="M7.6 9.8 L14.2 14.8 L20.8 9.8"/></g></svg></div><div class="ib" style="left:49px;top:115px"><svg width="28" height="28" style="position:absolute;left:0;top:0"><g fill="none" stroke="#8d8d8d" stroke-width="1.2"><rect x="8.6" y="8.3" width="11.4" height="12" rx="0.8"/><path d="M10.8 11.2 H17.8 M10.8 13.6 H17.8 M10.8 16.1 H13.8"/></g></svg></div><div class="ib" style="left:86px;top:115px"><svg width="28" height="28" style="position:absolute;left:0;top:0"><g fill="none" stroke="#8d8d8d" stroke-width="1.2"><circle cx="15.6" cy="16.6" r="6.3"/><path d="M15.7 13.6 V16.9 H18.8 M13.2 7.8 H18.2 M15.7 7.8 V10.3"/></g></svg></div><div class="badge" style="top:114px;border-color:#f2a25a;background:#fcf7f3">Medium</div></div>
<div class="card" style="left:775px;top:246px;height:158px"><div class="tag">Incident Request ID: 101</div><svg style="position:absolute;left:13px;top:44px" width="21" height="23.2" viewBox="0 0 21 23.2" ><path d="M10.5 1.2 L19.5 6.4 V16.8 L10.5 22 L1.5 16.8 V6.4 Z" fill="#f0901e" stroke="#f0901e" stroke-width="2.4" stroke-linejoin="round"/><g transform="translate(10.3 11.6) rotate(28)"><path d="M-4 -6 H-1.5 A1.6 1.6 0 0 0 1.5 -6 H4 V6 H1.5 A1.6 1.6 0 0 0 -1.5 6 H-4 Z" fill="#fff" stroke="#fff" stroke-width="0.6" stroke-linejoin="round"/></g></svg><div class="ttl" style="font-size:15.7px">Faulty Keyboards</div><div class="meta" style="top:76px"><span class="mi">Mary</span><span class="mi">Open</span><span class="mi">Aug 8, 2018 11:59 PM</span></div><div class="ib" style="left:12px;top:115px"><svg width="28" height="28" style="position:absolute;left:0;top:0"><g fill="none" stroke="#8d8d8d" stroke-width="1.2"><rect x="7.3" y="9.2" width="13.8" height="10.2" rx="1.2"/><path d="M7.6 9.8 L14.2 14.8 L20.8 9.8"/></g></svg></div><div class="ib" style="left:49px;top:115px"><svg width="28" height="28" style="position:absolute;left:0;top:0"><g fill="none" stroke="#8d8d8d" stroke-width="1.2"><rect x="8.6" y="8.3" width="11.4" height="12" rx="0.8"/><path d="M10.8 11.2 H17.8 M10.8 13.6 H17.8 M10.8 16.1 H13.8"/></g></svg></div><div class="ib" style="left:86px;top:115px"><svg width="28" height="28" style="position:absolute;left:0;top:0"><g fill="none" stroke="#8d8d8d" stroke-width="1.2"><circle cx="15.6" cy="16.6" r="6.3"/><path d="M15.7 13.6 V16.9 H18.8 M13.2 7.8 H18.2 M15.7 7.8 V10.3"/></g></svg></div><div class="badge" style="top:114px;border-color:#f2a25a;background:#fcf7f3">Medium</div></div>
<div class="card" style="left:775px;top:412.5px;height:158px"><div class="tag">Incident Request ID: 110</div><svg style="position:absolute;left:13px;top:44px" width="21" height="23.2" viewBox="0 0 21 23.2" ><path d="M10.5 1.2 L19.5 6.4 V16.8 L10.5 22 L1.5 16.8 V6.4 Z" fill="#f0901e" stroke="#f0901e" stroke-width="2.4" stroke-linejoin="round"/><g transform="translate(10.3 11.6) rotate(28)"><path d="M-4 -6 H-1.5 A1.6 1.6 0 0 0 1.5 -6 H4 V6 H1.5 A1.6 1.6 0 0 0 -1.5 6 H-4 Z" fill="#fff" stroke="#fff" stroke-width="0.6" stroke-linejoin="round"/></g></svg><div class="ttl" style="font-size:15.7px">kB</div><div class="meta" style="top:76px"><span class="mi" style="width:96px">Shaun Mur...</span><span class="mi">Open</span><span class="mi">Aug 16, 2018 03:08 AM</span></div><div class="ib" style="left:12px;top:115px"><svg width="28" height="28" style="position:absolute;left:0;top:0"><g fill="none" stroke="#8d8d8d" stroke-width="1.2"><rect x="7.3" y="9.2" width="13.8" height="10.2" rx="1.2"/><path d="M7.6 9.8 L14.2 14.8 L20.8 9.8"/></g></svg></div><div class="ib" style="left:49px;top:115px"><svg width="28" height="28" style="position:absolute;left:0;top:0"><g fill="none" stroke="#8d8d8d" stroke-width="1.2"><rect x="8.6" y="8.3" width="11.4" height="12" rx="0.8"/><path d="M10.8 11.2 H17.8 M10.8 13.6 H17.8 M10.8 16.1 H13.8"/></g></svg></div><div class="ib" style="left:86px;top:115px"><svg width="28" height="28" style="position:absolute;left:0;top:0"><g fill="none" stroke="#8d8d8d" stroke-width="1.2"><circle cx="15.6" cy="16.6" r="6.3"/><path d="M15.7 13.6 V16.9 H18.8 M13.2 7.8 H18.2 M15.7 7.8 V10.3"/></g></svg></div><div class="badge" style="top:114px;border-color:#9a9a9a;background:#f6f6f6">Low</div></div>
<div class="card" style="left:775px;top:579px;height:158px"><div class="tag">Incident Request ID: 112</div><svg style="position:absolute;left:13px;top:44px" width="21" height="23.2" viewBox="0 0 21 23.2" ><path d="M10.5 1.2 L19.5 6.4 V16.8 L10.5 22 L1.5 16.8 V6.4 Z" fill="#f0901e" stroke="#f0901e" stroke-width="2.4" stroke-linejoin="round"/><g transform="translate(10.3 11.6) rotate(28)"><path d="M-4 -6 H-1.5 A1.6 1.6 0 0 0 1.5 -6 H4 V6 H1.5 A1.6 1.6 0 0 0 -1.5 6 H-4 Z" fill="#fff" stroke="#fff" stroke-width="0.6" stroke-linejoin="round"/></g></svg><div class="ttl" style="font-size:15.7px">Poor network connectivity</div><div class="meta" style="top:76px"><span class="mi">Jendra John</span><span class="mi">Open</span><span class="mi">May 31, 2019 02:30 AM</span></div><div class="ib" style="left:12px;top:115px"><svg width="28" height="28" style="position:absolute;left:0;top:0"><g fill="none" stroke="#8d8d8d" stroke-width="1.2"><rect x="7.3" y="9.2" width="13.8" height="10.2" rx="1.2"/><path d="M7.6 9.8 L14.2 14.8 L20.8 9.8"/></g></svg></div><div class="ib" style="left:49px;top:115px"><svg width="28" height="28" style="position:absolute;left:0;top:0"><g fill="none" stroke="#8d8d8d" stroke-width="1.2"><rect x="8.6" y="8.3" width="11.4" height="12" rx="0.8"/><path d="M10.8 11.2 H17.8 M10.8 13.6 H17.8 M10.8 16.1 H13.8"/></g></svg></div><div class="ib" style="left:86px;top:115px"><svg width="28" height="28" style="position:absolute;left:0;top:0"><g fill="none" stroke="#8d8d8d" stroke-width="1.2"><circle cx="15.6" cy="16.6" r="6.3"/><path d="M15.7 13.6 V16.9 H18.8 M13.2 7.8 H18.2 M15.7 7.8 V10.3"/></g></svg></div><div class="badge" style="top:114px;border-color:#f2a25a;background:#fcf7f3">Medium</div></div>
<div class="card" style="left:775px;top:745.5px;height:158px"><div class="tag">Incident Request ID: 159</div><svg style="position:absolute;left:13px;top:44px" width="21" height="23.2" viewBox="0 0 21 23.2" ><path d="M10.5 1.2 L19.5 6.4 V16.8 L10.5 22 L1.5 16.8 V6.4 Z" fill="#f0901e" stroke="#f0901e" stroke-width="2.4" stroke-linejoin="round"/><g transform="translate(10.3 11.6) rotate(28)"><path d="M-4 -6 H-1.5 A1.6 1.6 0 0 0 1.5 -6 H4 V6 H1.5 A1.6 1.6 0 0 0 -1.5 6 H-4 Z" fill="#fff" stroke="#fff" stroke-width="0.6" stroke-linejoin="round"/></g></svg><div class="ttl" style="font-size:15.7px">Vpn issue</div><div class="meta" style="top:76px"><span class="mi" style="width:96px">Shaun Mur...</span><span class="mi">Open</span><span class="mi">Feb 23, 2022 04:30 AM</span></div><div class="ib" style="left:12px;top:115px"><svg width="28" height="28" style="position:absolute;left:0;top:0"><g fill="none" stroke="#8d8d8d" stroke-width="1.2"><rect x="7.3" y="9.2" width="13.8" height="10.2" rx="1.2"/><path d="M7.6 9.8 L14.2 14.8 L20.8 9.8"/></g></svg></div><div class="ib" style="left:49px;top:115px"><svg width="28" height="28" style="position:absolute;left:0;top:0"><g fill="none" stroke="#8d8d8d" stroke-width="1.2"><rect x="8.6" y="8.3" width="11.4" height="12" rx="0.8"/><path d="M10.8 11.2 H17.8 M10.8 13.6 H17.8 M10.8 16.1 H13.8"/></g></svg></div><div class="ib" style="left:86px;top:115px"><svg width="28" height="28" style="position:absolute;left:0;top:0"><g fill="none" stroke="#8d8d8d" stroke-width="1.2"><circle cx="15.6" cy="16.6" r="6.3"/><path d="M15.7 13.6 V16.9 H18.8 M13.2 7.8 H18.2 M15.7 7.8 V10.3"/></g></svg></div><div class="badge" style="top:114px;border-color:#f2a25a;background:#fcf7f3">Medium</div></div>
<div class="card" style="left:1121.5px;top:246px;height:158px"><div class="tag">Incident Request ID: 2119042</div><svg style="position:absolute;left:13px;top:44px" width="21" height="23.2" viewBox="0 0 21 23.2" ><path d="M10.5 1.2 L19.5 6.4 V16.8 L10.5 22 L1.5 16.8 V6.4 Z" fill="#f0901e" stroke="#f0901e" stroke-width="2.4" stroke-linejoin="round"/><g transform="translate(10.3 11.6) rotate(28)"><path d="M-4 -6 H-1.5 A1.6 1.6 0 0 0 1.5 -6 H4 V6 H1.5 A1.6 1.6 0 0 0 -1.5 6 H-4 Z" fill="#fff" stroke="#fff" stroke-width="0.6" stroke-linejoin="round"/></g></svg><div class="ttl" style="font-size:16.6px;-webkit-text-stroke:0.4px #2a2a2a">Macbook is not working</div><div class="meta" style="top:76px"><span class="mi" style="width:96px">Jendra John...</span><span class="mi">Open</span><span class="mi">No due date set</span></div><div class="ib" style="left:12px;top:115px"><svg width="28" height="28" style="position:absolute;left:0;top:0"><g fill="none" stroke="#8d8d8d" stroke-width="1.2"><rect x="7.3" y="9.2" width="13.8" height="10.2" rx="1.2"/><path d="M7.6 9.8 L14.2 14.8 L20.8 9.8"/></g></svg></div><div class="ib" style="left:49px;top:115px"><svg width="28" height="28" style="position:absolute;left:0;top:0"><g fill="none" stroke="#8d8d8d" stroke-width="1.2"><rect x="8.6" y="8.3" width="11.4" height="12" rx="0.8"/><path d="M10.8 11.2 H17.8 M10.8 13.6 H17.8 M10.8 16.1 H13.8"/></g></svg></div><div class="ib" style="left:86px;top:115px"><svg width="28" height="28" style="position:absolute;left:0;top:0"><g fill="none" stroke="#8d8d8d" stroke-width="1.2"><circle cx="15.6" cy="16.6" r="6.3"/><path d="M15.7 13.6 V16.9 H18.8 M13.2 7.8 H18.2 M15.7 7.8 V10.3"/></g></svg></div><div class="badge" style="top:114px;border-color:#f07a62;background:#fdf6f4">High</div></div>
<div class="card" style="left:1121.5px;top:412.5px;height:158px"><div class="tag">Incident Request ID: 2119129</div><svg style="position:absolute;left:13px;top:44px" width="21" height="23.2" viewBox="0 0 21 23.2" ><path d="M10.5 1.2 L19.5 6.4 V16.8 L10.5 22 L1.5 16.8 V6.4 Z" fill="#f0901e" stroke="#f0901e" stroke-width="2.4" stroke-linejoin="round"/><g transform="translate(10.3 11.6) rotate(28)"><path d="M-4 -6 H-1.5 A1.6 1.6 0 0 0 1.5 -6 H4 V6 H1.5 A1.6 1.6 0 0 0 -1.5 6 H-4 Z" fill="#fff" stroke="#fff" stroke-width="0.6" stroke-linejoin="round"/></g></svg><div class="ttl" style="font-size:16.6px;-webkit-text-stroke:0.4px #2a2a2a">password</div><div class="meta" style="top:76px"><span class="mi" style="width:96px">Donald Will...</span><span class="mi">Open</span><span class="mi">No due date set</span></div><div class="ib" style="left:12px;top:115px"><svg width="28" height="28" style="position:absolute;left:0;top:0"><g fill="none" stroke="#8d8d8d" stroke-width="1.2"><rect x="7.3" y="9.2" width="13.8" height="10.2" rx="1.2"/><path d="M7.6 9.8 L14.2 14.8 L20.8 9.8"/></g></svg></div><div class="ib" style="left:49px;top:115px"><svg width="28" height="28" style="position:absolute;left:0;top:0"><g fill="none" stroke="#8d8d8d" stroke-width="1.2"><rect x="8.6" y="8.3" width="11.4" height="12" rx="0.8"/><path d="M10.8 11.2 H17.8 M10.8 13.6 H17.8 M10.8 16.1 H13.8"/></g></svg></div><div class="ib" style="left:86px;top:115px"><svg width="28" height="28" style="position:absolute;left:0;top:0"><g fill="none" stroke="#8d8d8d" stroke-width="1.2"><circle cx="15.6" cy="16.6" r="6.3"/><path d="M15.7 13.6 V16.9 H18.8 M13.2 7.8 H18.2 M15.7 7.8 V10.3"/></g></svg></div><div class="badge" style="top:114px;border-color:#6bb56b;background:#f4f4f4">Critical</div></div>
<div class="card" style="left:1121.5px;top:579px;height:158px"><div class="tag">Incident Request ID: 2119141</div><svg style="position:absolute;left:13px;top:44px" width="21" height="23.2" viewBox="0 0 21 23.2" ><path d="M10.5 1.2 L19.5 6.4 V16.8 L10.5 22 L1.5 16.8 V6.4 Z" fill="#f0901e" stroke="#f0901e" stroke-width="2.4" stroke-linejoin="round"/><g transform="translate(10.3 11.6) rotate(28)"><path d="M-4 -6 H-1.5 A1.6 1.6 0 0 0 1.5 -6 H4 V6 H1.5 A1.6 1.6 0 0 0 -1.5 6 H-4 Z" fill="#fff" stroke="#fff" stroke-width="0.6" stroke-linejoin="round"/></g></svg><div class="ttl" style="font-size:16.6px;-webkit-text-stroke:0.4px #2a2a2a">Mark Antony</div><div class="meta" style="top:76px"><span class="mi" style="width:96px">BRANDEFE...</span><span class="mi">Open</span><span class="mi">No due date set</span></div><div class="ib" style="left:12px;top:115px"><svg width="28" height="28" style="position:absolute;left:0;top:0"><g fill="none" stroke="#8d8d8d" stroke-width="1.2"><rect x="7.3" y="9.2" width="13.8" height="10.2" rx="1.2"/><path d="M7.6 9.8 L14.2 14.8 L20.8 9.8"/></g></svg></div><div class="ib" style="left:49px;top:115px"><svg width="28" height="28" style="position:absolute;left:0;top:0"><g fill="none" stroke="#8d8d8d" stroke-width="1.2"><rect x="8.6" y="8.3" width="11.4" height="12" rx="0.8"/><path d="M10.8 11.2 H17.8 M10.8 13.6 H17.8 M10.8 16.1 H13.8"/></g></svg></div><div class="ib" style="left:86px;top:115px"><svg width="28" height="28" style="position:absolute;left:0;top:0"><g fill="none" stroke="#8d8d8d" stroke-width="1.2"><circle cx="15.6" cy="16.6" r="6.3"/><path d="M15.7 13.6 V16.9 H18.8 M13.2 7.8 H18.2 M15.7 7.8 V10.3"/></g></svg></div><div class="badge" style="top:114px;border-color:#6bb56b;background:#f4f4f4">Major Incident</div></div>
</div>
<div style="position:absolute;left:1448px;top:127px;width:32px;height:754px;background:linear-gradient(to right,rgba(0,0,10,0),rgba(0,0,10,0.035) 35%,rgba(0,0,10,0.14))"></div>
<div style="position:absolute;left:1421px;top:505px;width:40px;height:40px;border:1px solid #b9b9b9;border-radius:50%;background:#fff;box-shadow:0 1px 4px rgba(0,0,0,0.12)"></div>
<svg style="position:absolute;left:1434px;top:515px" width="16" height="20" viewBox="0 0 16 20" ><path d="M5 3.5 L12 10 L5 16.5" fill="none" stroke="#444" stroke-width="1.8" stroke-linecap="round" stroke-linejoin="round"/></svg>
<div id="dd">
<div class="notch"></div>
<div class="srch"><svg width="16" height="16" style="position:absolute;left:9px;top:8px"><g fill="none" stroke="#999" stroke-width="1.3"><circle cx="7" cy="7" r="5.6"/><path d="M11 11 L14.5 14.5"/></g></svg><div style="position:absolute;left:31px;top:7px;width:1px;height:17px;background:#333"></div><div style="position:absolute;left:31px;top:6px;font-size:13.5px;line-height:19px;color:#727272">Search Views</div></div>
<div class="ddi" style="top:57px">My Open Requests</div>
<svg style="position:absolute;left:271px;top:59px" width="16" height="16" viewBox="0 0 16 16"><path d="M8 1 L10.1 5.6 L15 6.1 L11.3 9.4 L12.4 14.4 L8 11.8 L3.6 14.4 L4.7 9.4 L1 6.1 L5.9 5.6 Z" fill="#c9c9c9" stroke="#c9c9c9" stroke-width="0.8" stroke-linejoin="round"/></svg>
<div class="ddi" style="top:94px">My Overdue Requests</div>
<svg style="position:absolute;left:271px;top:96px" width="16" height="16" viewBox="0 0 16 16"><path d="M8 1 L10.1 5.6 L15 6.1 L11.3 9.4 L12.4 14.4 L8 11.8 L3.6 14.4 L4.7 9.4 L1 6.1 L5.9 5.6 Z" fill="#c9c9c9" stroke="#c9c9c9" stroke-width="0.8" stroke-linejoin="round"/></svg>
<div class="ddi" style="top:131px">My Requests Due Today</div>
<svg style="position:absolute;left:271px;top:133px" width="16" height="16" viewBox="0 0 16 16"><path d="M8 1 L10.1 5.6 L15 6.1 L11.3 9.4 L12.4 14.4 L8 11.8 L3.6 14.4 L4.7 9.4 L1 6.1 L5.9 5.6 Z" fill="#c9c9c9" stroke="#c9c9c9" stroke-width="0.8" stroke-linejoin="round"/></svg>
<div class="ddi" style="top:168px">My Requests On Hold</div>
<svg style="position:absolute;left:271px;top:170px" width="16" height="16" viewBox="0 0 16 16"><path d="M8 1 L10.1 5.6 L15 6.1 L11.3 9.4 L12.4 14.4 L8 11.8 L3.6 14.4 L4.7 9.4 L1 6.1 L5.9 5.6 Z" fill="#c9c9c9" stroke="#c9c9c9" stroke-width="0.8" stroke-linejoin="round"/></svg>
<div class="ddi" style="top:205px">My Pending Requests or Tasks</div>
<svg style="position:absolute;left:271px;top:207px" width="16" height="16" viewBox="0 0 16 16"><path d="M8 1 L10.1 5.6 L15 6.1 L11.3 9.4 L12.4 14.4 L8 11.8 L3.6 14.4 L4.7 9.4 L1 6.1 L5.9 5.6 Z" fill="#c9c9c9" stroke="#c9c9c9" stroke-width="0.8" stroke-linejoin="round"/></svg>
<div class="ddi" style="top:242px">Open Requests</div>
<svg style="position:absolute;left:271px;top:244px" width="16" height="16" viewBox="0 0 16 16"><path d="M8 1 L10.1 5.6 L15 6.1 L11.3 9.4 L12.4 14.4 L8 11.8 L3.6 14.4 L4.7 9.4 L1 6.1 L5.9 5.6 Z" fill="#c9c9c9" stroke="#c9c9c9" stroke-width="0.8" stroke-linejoin="round"/></svg>
<div class="ddi" style="top:279px">Overdue Requests</div>
<svg style="position:absolute;left:271px;top:281px" width="16" height="16" viewBox="0 0 16 16"><path d="M8 1 L10.1 5.6 L15 6.1 L11.3 9.4 L12.4 14.4 L8 11.8 L3.6 14.4 L4.7 9.4 L1 6.1 L5.9 5.6 Z" fill="#c9c9c9" stroke="#c9c9c9" stroke-width="0.8" stroke-linejoin="round"/></svg>
<div class="ddi" style="top:316px">Requests Pending Approval</div>
<svg style="position:absolute;left:271px;top:318px" width="16" height="16" viewBox="0 0 16 16"><path d="M8 1 L10.1 5.6 L15 6.1 L11.3 9.4 L12.4 14.4 L8 11.8 L3.6 14.4 L4.7 9.4 L1 6.1 L5.9 5.6 Z" fill="#c9c9c9" stroke="#c9c9c9" stroke-width="0.8" stroke-linejoin="round"/></svg>
<div style="position:absolute;left:0;top:348px;width:307px;height:1px;background:#e6e6e6"></div>
<div style="position:absolute;left:0;top:349px;width:307px;height:113px;background:#fbfbfb"></div>
<div style="position:absolute;left:13px;top:362px;font-size:10.3px;font-weight:700;line-height:14px;color:#444;white-space:nowrap">REQUEST TYPE</div>
<div style="position:absolute;left:12px;top:386px;width:84px;height:66px;border:1.5px solid #4a86e8;border-radius:5px;background:#eef5fe"></div>
<svg style="position:absolute;left:44.5px;top:400px" width="20" height="22.1" viewBox="0 0 21 23.2" ><path d="M10.5 1.2 L19.5 6.4 V16.8 L10.5 22 L1.5 16.8 V6.4 Z" fill="#f0901e" stroke="#f0901e" stroke-width="2.4" stroke-linejoin="round"/><g transform="translate(10.3 11.6) rotate(28)"><path d="M-4 -6 H-1.5 A1.6 1.6 0 0 0 1.5 -6 H4 V6 H1.5 A1.6 1.6 0 0 0 -1.5 6 H-4 Z" fill="#fff" stroke="#fff" stroke-width="0.6" stroke-linejoin="round"/></g></svg>
<div style="position:absolute;left:12px;top:424px;width:84px;text-align:center;font-size:13px;line-height:18px;color:#333">Incidents</div>
<svg style="position:absolute;left:143px;top:399px" width="20" height="22.1" viewBox="0 0 21 23.2" ><path d="M10.5 1.2 L19.5 6.4 V16.8 L10.5 22 L1.5 16.8 V6.4 Z" fill="#1ab3b8" stroke="#1ab3b8" stroke-width="2.4" stroke-linejoin="round"/><path d="M5.5 7.2 H7.5 L9 13.7 H15 L16 9.2 H8" fill="none" stroke="#fff" stroke-width="1.6" stroke-linejoin="round"/><circle cx="9.5" cy="15.7" r="1.1" fill="#fff"/><circle cx="14.5" cy="15.7" r="1.1" fill="#fff"/></svg>
<div style="position:absolute;left:111px;top:424px;width:84px;text-align:center;font-size:13px;line-height:18px;color:#333">Service</div>
<svg style="position:absolute;left:247px;top:398px" width="13.5" height="14.9" viewBox="0 0 21 23.2" ><path d="M10.5 1.2 L19.5 6.4 V16.8 L10.5 22 L1.5 16.8 V6.4 Z" fill="#1ab3b8" stroke="#1ab3b8" stroke-width="2.4" stroke-linejoin="round"/><path d="M5.5 7.2 H7.5 L9 13.7 H15 L16 9.2 H8" fill="none" stroke="#fff" stroke-width="1.6" stroke-linejoin="round"/><circle cx="9.5" cy="15.7" r="1.1" fill="#fff"/><circle cx="14.5" cy="15.7" r="1.1" fill="#fff"/></svg>
<div style="position:absolute;left:239.5px;top:404px;width:15.5px;height:16.5px;border-radius:50%;background:#fafafa"></div>
<svg style="position:absolute;left:240.5px;top:405px" width="13.7" height="15.1" viewBox="0 0 21 23.2" ><path d="M10.5 1.2 L19.5 6.4 V16.8 L10.5 22 L1.5 16.8 V6.4 Z" fill="#f0901e" stroke="#f0901e" stroke-width="2.4" stroke-linejoin="round"/><g transform="translate(10.3 11.6) rotate(28)"><path d="M-4 -6 H-1.5 A1.6 1.6 0 0 0 1.5 -6 H4 V6 H1.5 A1.6 1.6 0 0 0 -1.5 6 H-4 Z" fill="#fff" stroke="#fff" stroke-width="0.6" stroke-linejoin="round"/></g></svg>
<div style="position:absolute;left:209px;top:424px;width:84px;text-align:center;font-size:13px;line-height:18px;color:#333">Both</div>
<div style="position:absolute;left:0;top:462px;width:307px;height:1px;background:#e6e6e6"></div>
<svg style="position:absolute;left:17px;top:479px" width="17" height="20" viewBox="0 0 17 20" ><g fill="none" stroke="#4a86e8" stroke-width="1.3"><path d="M3 5 H14 L13 18.5 H4 Z"/><path d="M1.5 5 H15.5 M6 5 V2.5 H11 V5 M7 8.5 V15.5 M10 8.5 V15.5"/></g></svg>
<div class="ddi" style="left:43px;top:479px">Trashed Requests</div>
<svg style="position:absolute;left:17px;top:518px" width="18" height="16" viewBox="0 0 18 16" ><g fill="none" stroke="#4a86e8" stroke-width="1.3"><rect x="1.5" y="2" width="15" height="4.5"/><path d="M2.5 6.5 V14.5 H15.5 V6.5 M7 9.5 H11"/></g></svg>
<div class="ddi" style="left:43px;top:517px">Archived Requests</div>
</div>
<div style="position:absolute;left:0;top:871px;width:1480px;height:9.5px;background:linear-gradient(to bottom,rgba(0,0,0,0),rgba(0,0,0,0.05))"></div>
<div style="position:absolute;left:0;top:880.5px;width:1480px;height:1px;background:#e3e3e3"></div>
<div style="position:absolute;left:50px;top:881.5px;width:1480px;height:30px;background:#fff"></div><div style="position:absolute;left:0;top:881px;width:50px;height:30px;background:#fff"></div>
<div style="position:absolute;left:1226px;top:881px;width:1px;height:30px;background:#e6e6e6"></div>
<div style="position:absolute;left:1268px;top:881px;width:1px;height:30px;background:#e6e6e6"></div>
<div style="position:absolute;left:1310px;top:881px;width:1px;height:30px;background:#e6e6e6"></div>
<div style="position:absolute;left:1352px;top:881px;width:1px;height:30px;background:#e6e6e6"></div>
<div style="position:absolute;left:1394px;top:881px;width:1px;height:30px;background:#e6e6e6"></div>
<div style="position:absolute;left:1436px;top:881px;width:1px;height:30px;background:#e6e6e6"></div>
<svg style="position:absolute;left:1236px;top:887px" width="22" height="18" viewBox="0 0 22 18" ><path d="M11 2.6 L19.2 15.6 H2.8 Z" fill="#f2532d" stroke="#f2532d" stroke-width="3" stroke-linejoin="round"/><path d="M11 7 V10.8" stroke="#fff" stroke-width="1.7" stroke-linecap="round"/><circle cx="11" cy="13.6" r="0.95" fill="#fff"/></svg>
<svg style="position:absolute;left:1278px;top:886px" width="23" height="19" viewBox="0 0 23 19" ><g fill="none" stroke="#333" stroke-width="1.5" stroke-linecap="round" stroke-linejoin="round"><path d="M2.2 4.6 H9.4 L2.4 14.8 Q2 16 3.5 16 H10.3 Q11.8 16 12.6 14.6 L15.6 8.6"/><path d="M12.6 14 L17.2 7 L20.8 15.6 Z"/></g><circle cx="14.2" cy="3.9" r="1.1" fill="#333"/></svg>
<svg style="position:absolute;left:1321px;top:886px" width="23" height="20" viewBox="0 0 23 20" ><g fill="none" stroke="#333" stroke-width="1.5" stroke-linecap="round" stroke-linejoin="round"><path d="M14 2.5 H5 Q2.5 2.5 2.5 5 V15.5 Q2.5 18 5 18 H16 Q18.5 18 18.5 15.5 V11"/><path d="M6 7.5 H10 M6 10.5 H9 M6 14 H15"/><path d="M12.5 12.5 L19 5.5 L20.8 7.2 L14.2 14 L12.2 14.5 Z" fill="#333"/></g></svg>
<svg style="position:absolute;left:1363px;top:886px" width="22" height="20" viewBox="0 0 22 20" ><g fill="none" stroke="#333" stroke-width="1.5" stroke-linecap="round" stroke-linejoin="round"><path d="M5.5 2.5 H16.5 Q19 2.5 19 5 V12 Q19 14.5 16.5 14.5 H8 L3.8 18.3 Q3 18.8 3 18 V5 Q3 2.5 5.5 2.5 Z"/><path d="M7 7 H15 M7 10.3 H15"/></g></svg>
<svg style="position:absolute;left:1405px;top:885px" width="22" height="21" viewBox="0 0 22 21" ><g fill="none" stroke="#333" stroke-width="1.5" stroke-linecap="round" stroke-linejoin="round"><path d="M7.5 14 C5 12 5 8.5 6 7 A5.3 5.3 0 0 1 16 7 C17 8.5 17 12 14.5 14 V16 H7.5 Z"/><path d="M8 18.5 H14"/><path d="M11 0.9 V2 M4 3.6 L4.9 4.5 M18 3.6 L17.1 4.5 M0.9 9.2 H2.3 M19.7 9.2 H21.1"/></g></svg>
<svg style="position:absolute;left:1448px;top:888px" width="22" height="16" viewBox="0 0 22 16" ><g fill="none" stroke="#333" stroke-width="1.5" stroke-linecap="round" stroke-linejoin="round"><path d="M5.4 1.6 L14.6 5.8 V9.6 L5.4 13.6 Z"/><path d="M14.6 5.2 A2.5 2.5 0 0 1 14.6 10.2 M14.4 9.8 V14.4"/><path d="M2.3 6.4 V8.6" stroke-width="2.2"/></g></svg>
</div></div>
</body></html>
